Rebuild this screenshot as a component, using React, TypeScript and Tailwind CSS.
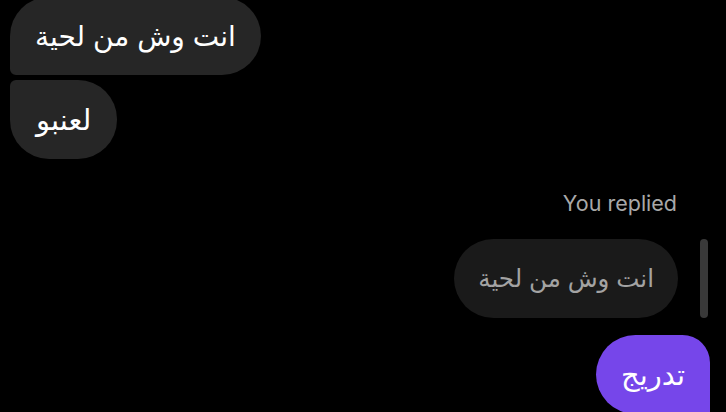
function App() {
  return (
    <div className="w-[726px] h-[412px] bg-black overflow-hidden font-['Inter','DejaVu_Sans',sans-serif]">
      {/* received messages */}
      <div className="flex flex-col items-start gap-[5px] px-[10px] -mt-[3px]">
        <div
          dir="rtl"
          className="h-[78px] flex items-center px-[25px] bg-[#262626] text-white text-[28px] rounded-tl-[39px] rounded-r-[39px] rounded-bl-[6px]"
        >
          انت وش من لحية
        </div>
        <div
          dir="rtl"
          className="h-[79px] flex items-center px-[26px] bg-[#262626] text-white text-[29px] rounded-tl-[6px] rounded-r-[39px] rounded-bl-[39px]"
        >
          لعنبو
        </div>
      </div>

      {/* reply */}
      <div className="flex flex-col items-end mt-[32px]">
        <div className="pr-[49px] text-[21.5px] leading-[24px] text-[#a8a8a8]">
          You replied
        </div>
        <div className="flex items-stretch gap-[22px] pr-[18px] mt-[24px]">
          <div
            dir="rtl"
            className="h-[79px] flex items-center px-[24px] bg-[#1a1a1a] text-[#a3a3a3] text-[24.5px] rounded-[40px]"
          >
            انت وش من لحية
          </div>
          <div className="w-[8px] rounded-full bg-[#393939]" />
        </div>
        <div className="pr-[16px] mt-[17px]">
          <div
            dir="rtl"
            className="h-[79px] flex items-center px-[25px] bg-[#7646ea] text-white text-[29px] rounded-tl-[40px] rounded-tr-[28px] rounded-bl-[40px]"
          >
            تدريج
          </div>
        </div>
      </div>
    </div>
  );
}

export default App;
